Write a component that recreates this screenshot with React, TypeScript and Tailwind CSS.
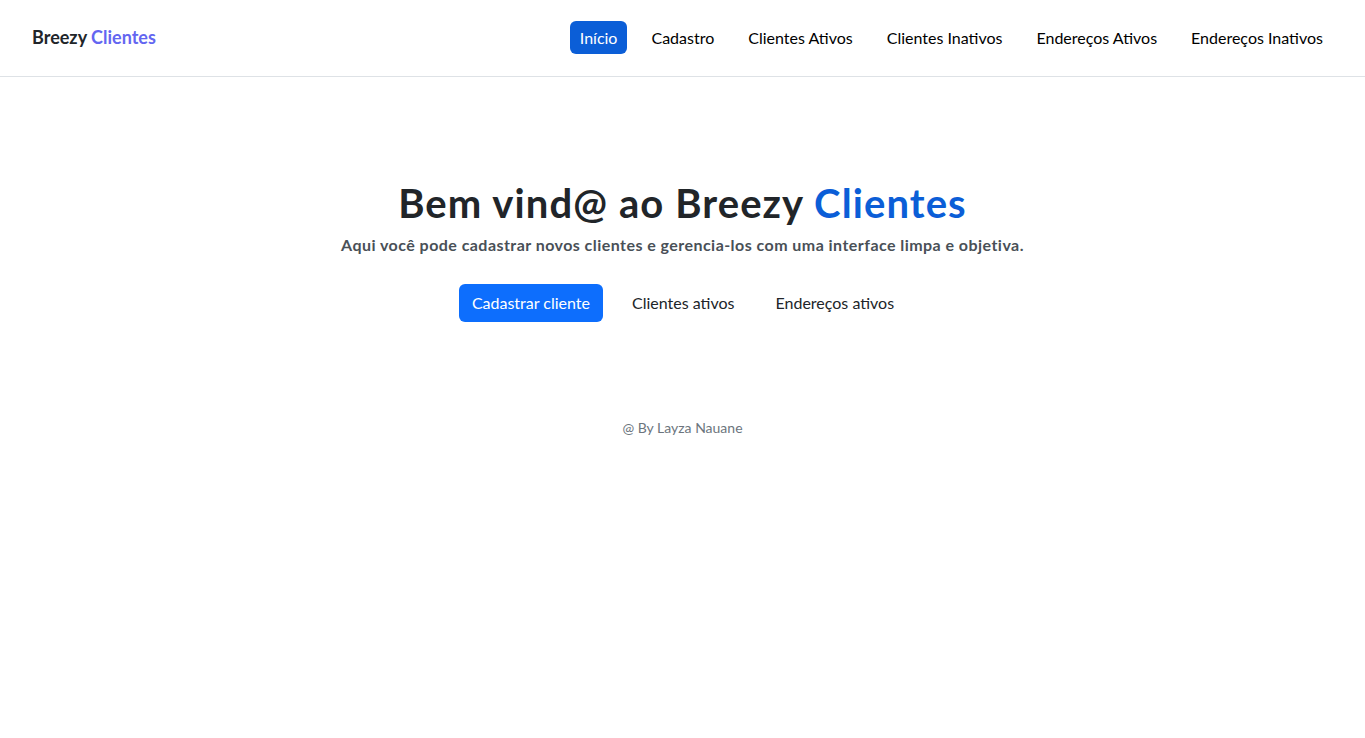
import React from 'react';

const navLinks = ['Início', 'Cadastro', 'Clientes Ativos', 'Clientes Inativos', 'Endereços Ativos', 'Endereços Inativos'];

const App: React.FC = () => {
  return (
    <div className="min-h-screen bg-white text-[#212529] font-['Segoe_UI','Lato','Liberation_Sans',sans-serif]">
      {/* Navbar */}
      <header className="h-[77px] border-b border-[#dee2e6] px-8 pb-[2px] flex items-center justify-between">
        <a className="text-[18px] font-bold text-[#212529]">
          Breezy <span className="text-[#6366f1]">Clientes</span>
        </a>
        <nav className="flex items-center gap-[14px]">
          {navLinks.map((link, i) => (
            <a
              key={link}
              className={`px-2.5 py-[6px] rounded-md text-[16px] leading-[21px] ${i === 0 ? 'bg-[#0b5ed7] text-white' : 'text-black'}`}
            >
              {link}
            </a>
          ))}
        </nav>
      </header>

      {/* Hero */}
      <main className="flex flex-col items-center pt-[102px]">
        <h1 className="text-[40px] leading-[48px] font-bold tracking-[1.1px] text-[#212529]">
          Bem vind@ ao Breezy <span className="text-[#0b5ed7]">Clientes</span>
        </h1>
        <p className="mt-[6px] text-[16px] font-bold tracking-[0.45px] text-[#495057]">
          Aqui você pode cadastrar novos clientes e gerencia-los com uma interface limpa e objetiva.
        </p>
        <div className="mt-[27px] flex items-center gap-[17px]">
          <button className="h-[38px] px-[13px] rounded-md bg-[#0d6efd] text-white text-[16px]">Cadastrar cliente</button>
          <button className="h-[38px] px-3 rounded-md text-[#212529] text-[16px]">Clientes ativos</button>
          <button className="h-[38px] px-3 rounded-md text-[#212529] text-[16px]">Endereços ativos</button>
        </div>
        <footer className="mt-[95px] text-[14px] text-[#6c757d]">@ By Layza Nauane</footer>
      </main>
    </div>
  );
};

export default App;
